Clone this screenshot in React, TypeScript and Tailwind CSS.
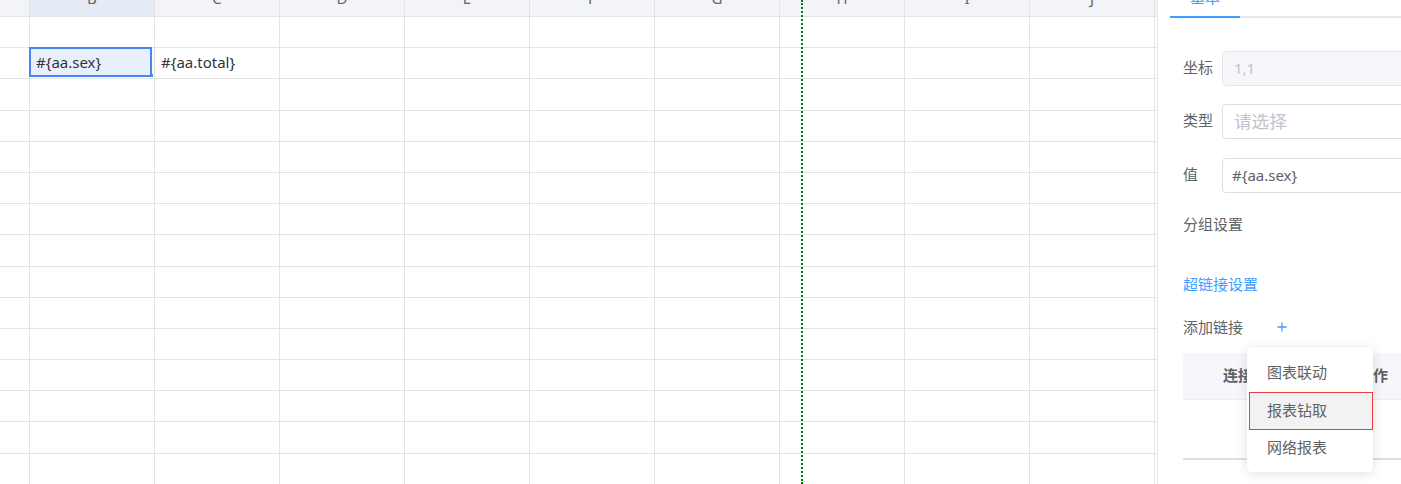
import { Plus } from 'lucide-react';

const cols = ['B', 'C', 'D', 'E', 'F', 'G', 'H', 'I', 'J'];
const rows = Array.from({ length: 15 }, (_, i) => i);

const cellText: Record<string, string> = {
  '1-B': '#{aa.sex}',
  '1-C': '#{aa.total}',
};

const Sheet = () => {
  return (
    <div className="relative w-[1157px] shrink-0 overflow-hidden font-['Noto_Sans','Noto_Sans_CJK_SC',sans-serif]">
      {/* column header, scrolled so only the bottom shows */}
      <div className="-mt-[20px] flex h-[37px] border-b border-[#e4e4e4] bg-[#f3f4f8] text-[15px] text-[#666]">
        <div className="w-[30px] shrink-0 border-r border-[#e4e4e4]" />
        {cols.map((c) => (
          <div
            key={c}
            className={`flex w-[125px] shrink-0 items-center justify-center border-r border-[#e4e4e4] ${c === 'B' ? 'bg-[#e4eaf6]' : ''}`}
          >
            {c}
          </div>
        ))}
      </div>

      {rows.map((r) => (
        <div key={r} className="flex h-[31.2px] border-b border-[#e4e4e4]">
          <div className="w-[30px] shrink-0 border-r border-[#e4e4e4]" />
          {cols.map((c) => {
            const selected = r === 1 && c === 'B';
            const text = cellText[`${r}-${c}`];
            return (
              <div
                key={c}
                className="relative flex w-[125px] shrink-0 items-center border-r border-[#e4e4e4] pb-[2px] pl-[6px] text-[15px] text-[#333]"
              >
                {selected && (
                  <div className="absolute -left-[1px] -top-[1px] h-[30px] w-[123px] border-2 border-[#4a86ef] bg-[#e9f0fd]">
                    <div className="absolute -bottom-[2px] -right-[3px] h-[3px] w-[3px] bg-[#4a86ef]" />
                  </div>
                )}
                {text && <span className="relative">{text}</span>}
              </div>
            );
          })}
        </div>
      ))}

      {/* page break line */}
      <div className="absolute bottom-0 left-[801px] top-0 border-l-2 border-dotted border-[#008000]" />
    </div>
  );
};

const Field = ({ label, children }: { label: string; children: React.ReactNode }) => (
  <div className="flex h-[35px] items-center">
    <div className="w-[39px] shrink-0 pb-[2px] text-[15px] text-[#606266]">{label}</div>
    {children}
  </div>
);

const Panel = () => {
  return (
    <div className="relative flex-1 overflow-hidden border-l border-[#e4e7ed] bg-white font-['Noto_Sans','Noto_Sans_CJK_SC',sans-serif]">
      {/* tabs */}
      <div className="-mt-[22px] ml-[12px] flex h-[40px] w-[400px] border-b-2 border-[#e4e7ed]">
        <div className="relative flex w-[70px] items-center justify-center text-[15px] text-[#409eff]">
          基本
          <div className="absolute -bottom-[2px] left-0 right-0 h-[2px] bg-[#409eff]" />
        </div>
      </div>

      <div className="pl-[25px]">
        <div className="mt-[33px]">
          <Field label="坐标">
            <div className="flex h-[35px] w-[300px] shrink-0 items-center rounded-[4px] border border-[#e4e7ed] bg-[#f5f7fa] pl-[11px] text-[15px] text-[#c0c4cc]">
              1,1
            </div>
          </Field>
        </div>
        <div className="mt-[18px]">
          <Field label="类型">
            <div className="flex h-[35px] w-[300px] shrink-0 items-center rounded-[4px] border border-[#dcdfe6] bg-white pl-[11px] text-[17.6px] text-[#c0c4cc]">
              请选择
            </div>
          </Field>
        </div>
        <div className="mt-[19px]">
          <Field label="值">
            <div className="flex h-[35px] w-[300px] shrink-0 items-center rounded-[4px] border border-[#dcdfe6] bg-white pl-[9px] text-[15px] text-[#606266]">
              #{'{'}aa.sex{'}'}
            </div>
          </Field>
        </div>

        <div className="mt-[20px] flex h-[22px] items-center text-[15px] text-[#606266]">分组设置</div>

        <div className="mt-[38px] flex h-[22px] items-center text-[15px] text-[#409eff]">超链接设置</div>

        <div className="mt-[21px] flex h-[22px] items-center text-[15px] text-[#606266]">
          <span className="w-[92px]">添加链接</span>
          <Plus className="h-[14px] w-[14px] text-[#409eff]" strokeWidth={2.2} />
        </div>

        {/* link table */}
        <div className="mt-[15px] w-[300px]">
          <div className="flex h-[47px] items-center border-b border-[#ebeef5] bg-[#f5f7fa] pb-[2px] text-[15px] font-bold text-[#606266]">
            <div className="w-[135px] pl-[40px]">连接名称</div>
            <div className="pl-[40px]">操作</div>
          </div>
          <div className="h-[60px] border-b-2 border-[#dcdfe6]" />
        </div>
      </div>

      {/* dropdown menu */}
      <div className="absolute left-[89px] top-[347px] w-[126px] rounded-[5px] bg-white pb-[4px] pt-[7px] shadow-[0_2px_12px_rgba(0,0,0,0.12)] text-[15px] text-[#606266]">
        <div className="flex h-[38px] items-center pb-[2px] pl-[20px]">图表联动</div>
        <div className="ml-[2px] flex h-[38px] items-center border border-[#f03c3c] bg-[#f2f2f2] pb-[2px] pl-[17px]">报表钻取</div>
        <div className="flex h-[38px] items-center pb-[3px] pl-[20px]">网络报表</div>
      </div>
    </div>
  );
};

export default function App() {
  return (
    <div className="flex h-[484px] w-[1401px] overflow-hidden bg-white">
      <Sheet />
      <Panel />
    </div>
  );
}
